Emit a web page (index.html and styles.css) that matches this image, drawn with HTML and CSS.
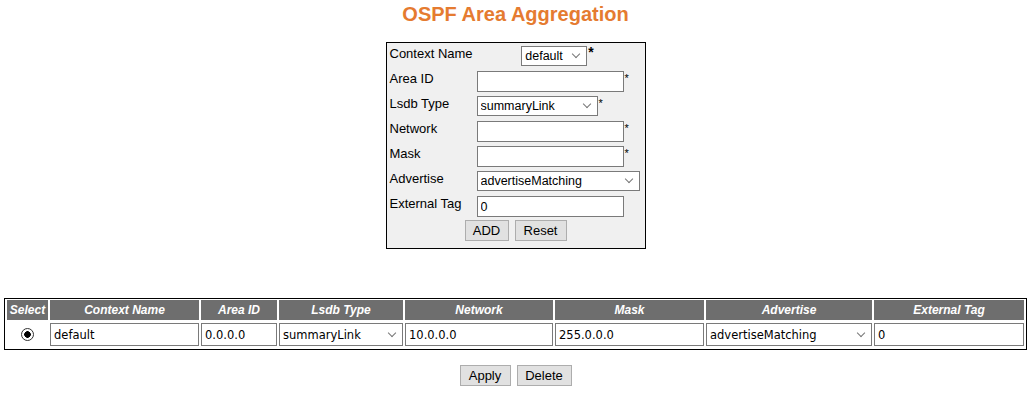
FILE: index.html
```html
<!DOCTYPE html>
<html lang="en">
<head>
  <meta charset="UTF-8">
  <title>OSPF Area Aggregation</title>
  <link rel="stylesheet" href="styles.css">
</head>
<body>

  <!-- TITLE -->
  <h1 class="page-title">OSPF Area Aggregation</h1>

  <!-- ADD FORM -->
  <form class="add-form">
    <div class="form-row">
      <label class="form-label">Context Name</label>
      <div class="form-field centered">
        <span class="sel-wrap">
          <select class="ctx-select">
            <option>default</option>
          </select>
        </span><span class="req bold">*</span>
      </div>
    </div>
    <div class="form-row">
      <label class="form-label">Area ID</label>
      <div class="form-field"><input type="text" class="text-in"><span class="req">*</span></div>
    </div>
    <div class="form-row">
      <label class="form-label">Lsdb Type</label>
      <div class="form-field">
        <span class="sel-wrap">
          <select class="lsdb-select">
            <option>summaryLink</option>
            <option>nssaExternalLink</option>
          </select>
        </span><span class="req">*</span>
      </div>
    </div>
    <div class="form-row">
      <label class="form-label">Network</label>
      <div class="form-field"><input type="text" class="text-in"><span class="req">*</span></div>
    </div>
    <div class="form-row">
      <label class="form-label">Mask</label>
      <div class="form-field"><input type="text" class="text-in"><span class="req">*</span></div>
    </div>
    <div class="form-row">
      <label class="form-label">Advertise</label>
      <div class="form-field">
        <span class="sel-wrap">
          <select class="adv-select">
            <option>advertiseMatching</option>
            <option>doNotAdvertiseMatching</option>
          </select>
        </span>
      </div>
    </div>
    <div class="form-row">
      <label class="form-label">External Tag</label>
      <div class="form-field"><input type="text" class="text-in" value="0"></div>
    </div>
    <div class="button-row">
      <button type="button" class="btn btn-add">ADD</button>
      <button type="reset" class="btn btn-reset">Reset</button>
    </div>
  </form>

  <!-- ENTRIES TABLE -->
  <table class="entry-table">
    <thead>
      <tr>
        <th class="col-select">Select</th>
        <th class="col-ctx">Context Name</th>
        <th class="col-area">Area ID</th>
        <th class="col-lsdb">Lsdb Type</th>
        <th class="col-net">Network</th>
        <th class="col-mask">Mask</th>
        <th class="col-adv">Advertise</th>
        <th class="col-tag">External Tag</th>
      </tr>
    </thead>
    <tbody>
      <tr>
        <td class="radio-cell"><input type="radio" name="sel" class="radio" checked></td>
        <td><input type="text" class="cell-in" value="default"></td>
        <td><input type="text" class="cell-in" value="0.0.0.0"></td>
        <td>
          <span class="sel-wrap block">
            <select class="cell-in">
              <option>summaryLink</option>
            </select>
          </span>
        </td>
        <td><input type="text" class="cell-in" value="10.0.0.0"></td>
        <td><input type="text" class="cell-in" value="255.0.0.0"></td>
        <td>
          <span class="sel-wrap block">
            <select class="cell-in">
              <option>advertiseMatching</option>
            </select>
          </span>
        </td>
        <td><input type="text" class="cell-in" value="0"></td>
      </tr>
    </tbody>
  </table>

  <div class="table-actions">
    <button type="button" class="btn btn-apply">Apply</button>
    <button type="button" class="btn btn-delete">Delete</button>
  </div>

</body>
</html>
```

FILE: styles.css
```css
body {
  margin: 0;
  font-family: 'Liberation Sans', Arial, sans-serif;
  color: #000;
  background-color: #fff;
}

.page-title {
  margin: 3px 0 16px;
  font-size: 20px;
  line-height: 23px;
  font-weight: bold;
  text-align: center;
  color: #e57b30;
}

/* add form */
.add-form {
  width: 260px;
  box-sizing: border-box;
  margin: 0 auto;
  padding: 1px 0 3px;
  background-color: #f0f0f0;
  border: 1px solid #000;
}

.form-row {
  display: flex;
  height: 25px;
}

.form-label {
  width: 87px;
  padding-left: 3px;
  font-size: 13px;
  line-height: 16px;
  padding-top: 2px;
}

.form-field {
  flex: 1;
  padding-top: 2px;
  display: flex;
  align-items: flex-start;
}

.form-field.centered {
  justify-content: center;
  padding-right: 6px;
}

.text-in,
.add-form select {
  font-family: 'Liberation Sans', Arial, sans-serif;
  font-size: 12.5px;
  color: #000;
  background-color: #fff;
  border: 1px solid #7a7a7a;
  box-sizing: border-box;
  margin: 0;
}

.text-in {
  width: 147px;
  height: 21px;
  padding: 1px 3px 0;
}

.add-form select {
  height: 20px;
  padding: 0 0 0 3px;
}

/* select with thin chevron */
.sel-wrap {
  position: relative;
  display: inline-block;
}

.sel-wrap.block {
  display: block;
}

.sel-wrap select {
  appearance: none;
  -webkit-appearance: none;
  border-radius: 0;
}

.sel-wrap::after {
  content: "";
  position: absolute;
  right: 8px;
  top: 50%;
  width: 5px;
  height: 5px;
  margin-top: -5px;
  border-right: 1px solid #777;
  border-bottom: 1px solid #777;
  transform: rotate(45deg);
  pointer-events: none;
}

.ctx-select {
  width: 66px;
}

.lsdb-select {
  width: 121px;
}

.adv-select {
  width: 163px;
}

.req {
  font-size: 11px;
  line-height: 14px;
  margin-left: 1px;
}

.req.bold {
  font-size: 14px;
  font-weight: bold;
  line-height: 12px;
}

.button-row {
  display: flex;
  justify-content: center;
  gap: 6px;
  height: 25px;
  padding-top: 1px;
}

.btn {
  font-family: 'Liberation Sans', Arial, sans-serif;
  font-size: 13px;
  color: #000;
  background-color: #e1e1e1;
  border: 1px solid #adadad;
  height: 21px;
  padding: 0;
  margin: 0;
  cursor: pointer;
}

.btn-add { width: 44px; }
.btn-reset { width: 52px; }
.btn-apply { width: 51px; }
.btn-delete { width: 55px; }

/* entries table */
.entry-table {
  width: calc(100% - 8px);
  margin: 49px 4px 0;
  border: 1px solid #000;
  border-spacing: 2px 1px;
  table-layout: fixed;
}

.entry-table th {
  height: 20px;
  padding: 0;
  background-color: #6e6e6e;
  color: #fff;
  font-size: 12px;
  font-weight: bold;
  font-style: italic;
  text-align: center;
}

.col-select { width: 41px; }
.col-ctx { width: 149px; }
.col-area { width: 76px; }
.col-lsdb { width: 124px; }
.col-net { width: 148px; }
.col-mask { width: 149px; }
.col-adv { width: 166px; }

.entry-table td {
  height: 27px;
  padding: 0;
}

.radio-cell {
  text-align: center;
}

.radio {
  appearance: none;
  width: 13px;
  height: 13px;
  margin: 3px 0 0;
  border: 1px solid #333;
  border-radius: 50%;
  background: radial-gradient(circle, #000 0 3px, #fff 3.6px);
}

.cell-in {
  display: block;
  width: 100%;
  height: 23px;
  box-sizing: border-box;
  margin: 0;
  padding: 1px 3px 0;
  font-family: 'DejaVu Sans', Tahoma, sans-serif;
  font-size: 11.5px;
  color: #000;
  background-color: #fff;
  border: 1px solid #7a7a7a;
}

select.cell-in {
  padding: 0 0 0 3px;
}

.table-actions {
  display: flex;
  justify-content: center;
  gap: 6px;
  margin-top: 15px;
}
```
